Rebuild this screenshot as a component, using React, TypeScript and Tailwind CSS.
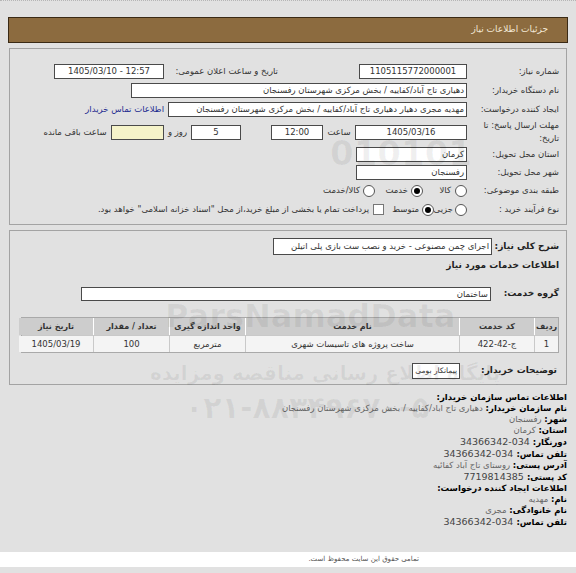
import React from "react";

const box = "h-[15px] shrink-0 bg-white border border-[#4a4a4a] flex items-center overflow-hidden whitespace-nowrap";

function Radio({ checked }: { checked?: boolean }) {
	return (
		<span className="w-[12px] h-[12px] shrink-0 rounded-full border border-[#555] bg-white flex items-center justify-center">
			{checked && <span className="w-[6px] h-[6px] rounded-full bg-black" />}
		</span>
	);
}

function Contact({ label, value, num }: { label: string; value?: string; num?: boolean }) {
	return (
		<div className="whitespace-nowrap">
			<span className="font-bold text-black">{label}</span>
			{value && (
				<span className={num ? "text-[#444] text-[9.5px]" : "text-[#666]"}>
					{" "}
					{num ? <span dir="ltr">{value}</span> : value}
				</span>
			)}
		</div>
	);
}

export default function App() {
	return (
		<div
			dir="rtl"
			className="relative w-[576px] h-[573px] overflow-hidden bg-[#e1e1e1] text-[8.5px] text-[#333] font-['DejaVu_Sans',sans-serif] whitespace-nowrap"
		>
			<div className="h-[2px] border-t border-dotted border-[#b5b5b5]" />

			<div className="px-[8px] pt-[15px]">
				{/* header */}
				<div className="h-[26px] bg-[#8c6b3f] border border-[#3a2a15] flex items-center pr-[19px] text-[#f2e8d6] text-[9px]">
					جزئیات اطلاعات نیاز
				</div>

				{/* panel 1 */}
				<div className="mt-[5px] mx-px border border-[#a3a3a3] pr-[7px] pt-[13px] pb-[5px]">
					<div className="flex items-center h-[19px]">
						<div className="w-[92px] shrink-0">شماره نیاز:</div>
						<div dir="ltr" className={`${box} w-[108px] justify-center`}>1105115772000001</div>
						<div className="w-[81px] shrink-0" />
						<div className="w-[114px] shrink-0">تاریخ و ساعت اعلان عمومی:</div>
						<div dir="ltr" className={`${box} w-[110px] justify-center`}>1405/03/10 - 12:57</div>
					</div>

					<div className="flex items-center h-[19px]">
						<div className="w-[92px] shrink-0">نام دستگاه خریدار:</div>
						<div className={`${box} w-[336px] pr-[2px]`}>دهیاری تاج آباد/کفاییه / بخش مرکزی شهرستان رفسنجان</div>
					</div>

					<div className="flex items-center h-[19px]">
						<div className="w-[92px] shrink-0">ایجاد کننده درخواست:</div>
						<div className={`${box} w-[299px] pr-[2px]`}>
							مهدیه مجری دهیار دهیاری تاج آباد/کفاییه / بخش مرکزی شهرستان رفسنجان
						</div>
						<div className="pr-[4px] text-[#1c2a8f]">اطلاعات تماس خریدار</div>
					</div>

					<div className="flex items-center h-[26px]">
						<div className="w-[92px] shrink-0 leading-[13px]">
							مهلت ارسال پاسخ: تا
							<br />
							تاریخ:
						</div>
						<div dir="ltr" className={`${box} w-[112px] justify-center`}>1405/03/16</div>
						<div className="w-[32px] shrink-0 text-center">ساعت</div>
						<div dir="ltr" className={`${box} w-[52px] justify-center`}>12:00</div>
						<div className="w-[30px] shrink-0" />
						<div className={`${box} w-[50px] justify-center`}>5</div>
						<div className="w-[27px] shrink-0 text-center">روز و</div>
						<div className={`${box} w-[53px] !bg-[#f5f3c9]`} />
						<div className="w-[72px] shrink-0 text-center">ساعت باقی مانده</div>
					</div>

					<div className="flex items-center h-[18px]">
						<div className="w-[92px] shrink-0">استان محل تحویل:</div>
						<div className={`${box} w-[111px] pr-[2px]`}>کرمان</div>
					</div>

					<div className="flex items-center h-[18px]">
						<div className="w-[92px] shrink-0">شهر محل تحویل:</div>
						<div className={`${box} w-[111px] pr-[2px]`}>رفسنجان</div>
					</div>

					<div className="flex items-center h-[19px]">
						<div className="w-[92px] shrink-0">طبقه بندی موضوعی:</div>
						<div className="w-[44px] shrink-0 flex items-center gap-[4px]">
							<Radio />
							<span>کالا</span>
						</div>
						<div className="w-[48px] shrink-0 flex items-center gap-[3px]">
							<Radio checked />
							<span>خدمت</span>
						</div>
						<div className="flex items-center gap-[3px]">
							<Radio />
							<span>کالا/خدمت</span>
						</div>
					</div>

					<div className="flex items-center h-[19px]">
						<div className="w-[92px] shrink-0">نوع فرآیند خرید :</div>
						<div className="w-[33px] shrink-0 flex items-center gap-[2px]">
							<Radio />
							<span>جزیی</span>
						</div>
						<div className="w-[50px] shrink-0 flex items-center gap-[3px]">
							<Radio checked />
							<span>متوسط</span>
						</div>
						<span className="w-[11px] h-[11px] shrink-0 bg-white border border-[#777]" />
						<span className="pr-[4px]">
							پرداخت تمام یا بخشی از مبلغ خرید،از محل "اسناد خزانه اسلامی" خواهد بود.
						</span>
					</div>
				</div>

				{/* panel 2 */}
				<div className="mt-[5px] mx-px border border-[#a3a3a3] pr-[7px] pl-[11px] pt-[7px] pb-[5px]">
					<div className="flex items-center h-[17px]">
						<div className="w-[67px] shrink-0 font-bold text-[#222] text-[9px]">شرح کلی نیاز:</div>
						<div className={`${box} !h-[17px] w-[219px] pr-[2px]`}>اجرای چمن مصنوعی - خرید و نصب ست بازی پلی اتیلن</div>
					</div>

					<div className="mt-[4px] h-[14px] flex items-center font-bold text-[#222] text-[9px]">اطلاعات خدمات مورد نیاز</div>

					<div className="mt-[14px] flex items-center h-[14px]">
						<div className="w-[68px] shrink-0 font-bold text-[#222] text-[9px]">گروه خدمت:</div>
						<div className={`${box} !h-[14px] w-[410px] pr-[2px]`}>ساختمان</div>
					</div>

					{/* table */}
					<div className="mt-[16px] border border-[#a9a9a9] bg-white">
						<div className="grid grid-cols-[23px_74px_213px_75px_75px_74px] gap-x-[1px] bg-white h-[17px] text-[#333] font-bold text-[8px]">
							<div className="bg-[#cdcdcd] flex items-center justify-center">ردیف</div>
							<div className="bg-[#cdcdcd] flex items-center justify-center">کد خدمت</div>
							<div className="bg-[#cdcdcd] flex items-center justify-center">نام خدمت</div>
							<div className="bg-[#cdcdcd] flex items-center justify-center">واحد اندازه گیری</div>
							<div className="bg-[#cdcdcd] flex items-center justify-center">تعداد / مقدار</div>
							<div className="bg-[#cdcdcd] flex items-center justify-center">تاریخ نیاز</div>
						</div>
						<div className="grid grid-cols-[23px_74px_213px_75px_75px_74px] gap-x-[1px] bg-[#c9c9c9] border-t border-[#c9c9c9] h-[17px]">
							<div className="bg-[#f4f4f4] flex items-center justify-center">1</div>
							<div className="bg-[#f4f4f4] flex items-center justify-center">
								<span dir="ltr">422-42-ج</span>
							</div>
							<div className="bg-[#f4f4f4] flex items-center justify-center">ساخت پروژه های تاسیسات شهری</div>
							<div className="bg-[#f4f4f4] flex items-center justify-center">مترمربع</div>
							<div className="bg-[#f4f4f4] flex items-center justify-center">100</div>
							<div className="bg-[#f4f4f4] flex items-center justify-center">1405/03/19</div>
						</div>
					</div>

					<div className="mt-[10px] flex items-center h-[16px]">
						<div className="w-[99px] shrink-0 pr-[2px] font-bold text-[#222] text-[9px]">توضیحات خریدار:</div>
						<div className={`${box} !h-[16px] px-[2px] text-[7.5px] !overflow-visible`}>پیمانکار بومی</div>
					</div>
				</div>

				{/* contact info */}
				<div className="mt-[7px] pr-[1px] leading-[11px] text-[8.5px]">
					<Contact label="اطلاعات تماس سازمان خریدار:" />
					<Contact label="نام سازمان خریدار:" value="دهیاری تاج اباد/کفاییه / بخش مرکزی شهرستان رفسنجان" />
					<Contact label="شهر:" value="رفسنجان" />
					<Contact label="استان:" value="کرمان" />
					<Contact label="دورنگار:" value="34366342-034" num />
					<Contact label="تلفن تماس:" value="34366342-034" num />
					<Contact label="آدرس پستی:" value="روستای تاج آباد کفائیه" />
					<Contact label="کد پستی:" value="7719814385" num />
					<Contact label="اطلاعات ایجاد کننده درخواست:" />
					<Contact label="نام:" value="مهدیه" />
					<Contact label="نام خانوادگی:" value="مجری" />
					<Contact label="تلفن تماس:" value="34366342-034" num />
				</div>
			</div>

			{/* footer */}
			<div className="absolute left-0 right-0 top-[552px] h-[15px] bg-white flex items-center pr-[157px] text-[7px] text-[#555]">
				تمامی حقوق این سایت محفوظ است.
			</div>

			{/* watermark */}
			<div className="pointer-events-none absolute left-[165px] top-[292px] text-[32px] font-bold text-black/[0.06]" dir="ltr">
				ParsNamadData
			</div>
			<div className="pointer-events-none absolute left-[150px] top-[358px] text-[20px] font-bold text-black/[0.06]">
				پایگاه اطلاع رسانی مناقصه ومزایده
			</div>
			<div className="pointer-events-none absolute left-[185px] top-[385px] text-[30px] font-bold text-black/[0.06]" dir="ltr">
				۰۲۱-۸۸۳۴۹۶۷۰-۵
			</div>
			<div className="pointer-events-none absolute left-[330px] top-[128px] text-[34px] font-bold text-black/[0.06]" dir="ltr">
				010101
			</div>
		</div>
	);
}
